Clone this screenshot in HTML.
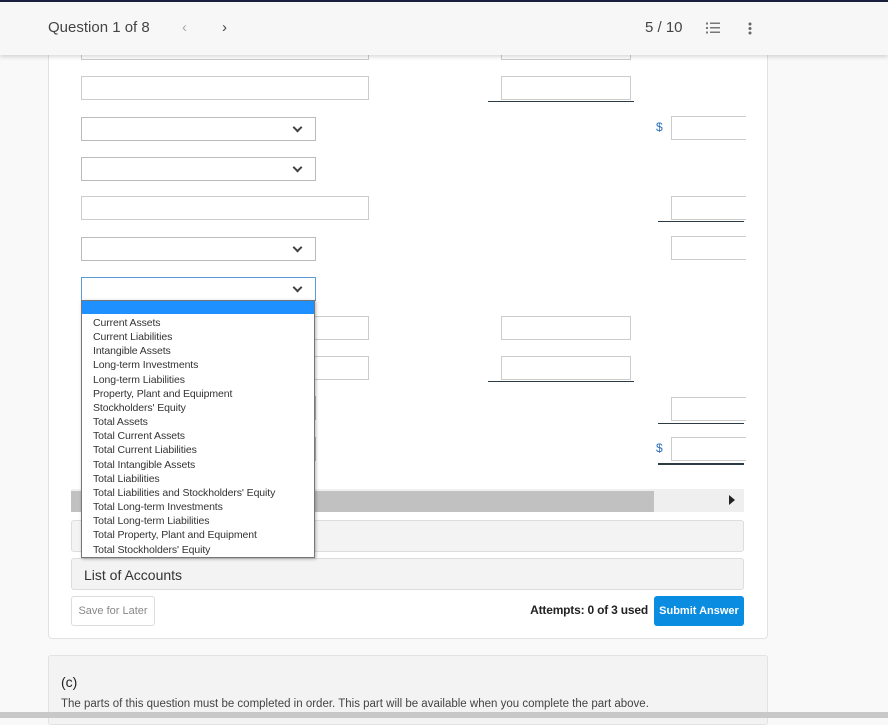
<!DOCTYPE html>
<html><head><meta charset="utf-8"><style>
*{box-sizing:border-box;margin:0;padding:0}
body{width:888px;height:718px;overflow:hidden;background:#f9f9f9;font-family:"Liberation Sans",sans-serif;position:relative;color:#333}
.abs{position:absolute}
.inp{position:absolute;height:24px;border:1px solid #ccc;background:#fff}
.sel{position:absolute;height:24px;border:1px solid #bbb;background:#fff;width:235px;left:81px}
.sel:after{content:"";position:absolute;right:14px;top:6px;width:5px;height:5px;border-right:2px solid #444;border-bottom:2px solid #444;transform:rotate(45deg)}
.line{position:absolute;height:1px;background:#2c3a44}
.dol{position:absolute;font-size:12px;color:#2a6ebb}
</style></head><body>
<div class="abs" style="left:48px;top:40px;width:720px;height:599px;background:#fff;border:1px solid #e2e2e2;border-top:none;border-radius:0 0 4px 4px"></div>

<div class="inp" style="left:81px;top:36px;width:288px"></div>
<div class="inp" style="left:501px;top:36px;width:130px"></div>
<div class="inp" style="left:81px;top:76px;width:288px"></div>
<div class="inp" style="left:501px;top:76px;width:130px"></div>
<div class="line" style="left:488px;top:101px;width:146px"></div>
<div class="sel" style="top:117px"></div>
<div class="dol" style="left:656px;top:120px">$</div>
<div class="inp" style="left:671px;top:116px;width:75px;border-right:none"></div>
<div class="sel" style="top:157px"></div>
<div class="inp" style="left:81px;top:196px;width:288px"></div>
<div class="inp" style="left:671px;top:196px;width:75px;border-right:none"></div>
<div class="line" style="left:658px;top:221px;width:86px"></div>
<div class="sel" style="top:237px"></div>
<div class="inp" style="left:671px;top:236px;width:75px;border-right:none"></div>
<div class="sel" style="top:277px;border-color:#5b9bd5"></div>
<div class="inp" style="left:81px;top:316px;width:288px"></div>
<div class="inp" style="left:501px;top:316px;width:130px"></div>
<div class="inp" style="left:81px;top:356px;width:288px"></div>
<div class="inp" style="left:501px;top:356px;width:130px"></div>
<div class="line" style="left:488px;top:381px;width:146px"></div>
<div class="sel" style="top:396px"></div>
<div class="inp" style="left:671px;top:397px;width:75px;border-right:none"></div>
<div class="line" style="left:658px;top:423px;width:86px"></div>
<div class="sel" style="top:437px"></div>
<div class="dol" style="left:656px;top:441px">$</div>
<div class="inp" style="left:671px;top:437px;width:75px;border-right:none"></div>
<div class="line" style="left:658px;top:463px;width:86px;height:2px"></div>

<div class="abs" style="left:71px;top:489px;width:673px;height:23px;background:#efefef"></div>
<div class="abs" style="left:71px;top:491px;width:583px;height:21px;background:#c1c1c1"></div>
<div class="abs" style="left:729px;top:495px;width:0;height:0;border-left:6px solid #222;border-top:5px solid transparent;border-bottom:5px solid transparent"></div>

<div class="abs" style="left:71px;top:520px;width:673px;height:32px;background:#f3f3f3;border:1px solid #ddd;border-radius:3px"></div>
<div class="abs" style="left:71px;top:558px;width:673px;height:32px;background:#f3f3f3;border:1px solid #ddd;border-radius:3px;font-size:14px;padding:8px 12px;color:#333">List of Accounts</div>

<div class="abs" style="left:71px;top:596px;width:84px;height:30px;border:1px solid #ddd;border-radius:3px;font-size:11px;color:#888;text-align:center;line-height:28px;background:#fff">Save for Later</div>
<div class="abs" style="left:520px;top:603px;width:128px;font-size:12px;font-weight:bold;color:#222;text-align:right;letter-spacing:-0.2px">Attempts: 0 of 3 used</div>
<div class="abs" style="left:654px;top:596px;width:90px;height:30px;background:#0a8de0;border-radius:3px;font-size:11px;font-weight:bold;color:#fff;text-align:center;line-height:30px">Submit Answer</div>

<div class="abs" style="left:48px;top:655px;width:720px;height:70px;background:#f3f3f3;border:1px solid #e2e2e2;border-radius:3px"></div>
<div class="abs" style="left:61px;top:674px;font-size:14px;color:#222">(c)</div>
<div class="abs" style="left:61px;top:698px;font-size:11.5px;color:#444">The parts of this question must be completed in order. This part will be available when you complete the part above.</div>
<div class="abs" style="left:0;top:712px;width:888px;height:6px;background:#c8c8c8"></div>

<div class="abs" style="left:81px;top:300px;width:234px;height:258px;background:#fff;border:1px solid #777;box-shadow:1px 1px 3px rgba(0,0,0,.3)">
<div style="height:13px;background:#1e90ff"></div>
<div style="padding:2px 0 0 11px;font-size:10.5px;line-height:14.15px;color:#333;letter-spacing:-0.1px">
Current Assets<br>Current Liabilities<br>Intangible Assets<br>Long-term Investments<br>Long-term Liabilities<br>Property, Plant and Equipment<br>Stockholders' Equity<br>Total Assets<br>Total Current Assets<br>Total Current Liabilities<br>Total Intangible Assets<br>Total Liabilities<br>Total Liabilities and Stockholders' Equity<br>Total Long-term Investments<br>Total Long-term Liabilities<br>Total Property, Plant and Equipment<br>Total Stockholders' Equity</div></div>

<div class="abs" style="left:0;top:0;width:888px;height:55px;background:#f7f7f7;border-top:2px solid #1a1f3d;box-shadow:0 2px 4px rgba(0,0,0,.15)"></div>
<div class="abs" style="left:48px;top:19px;font-size:15px;color:#444">Question 1 of 8</div>
<div class="abs" style="left:182px;top:19px;font-size:15px;color:#aaa">&lsaquo;</div>
<div class="abs" style="left:222px;top:19px;font-size:15px;color:#444">&rsaquo;</div>
<div class="abs" style="left:645px;top:19px;font-size:15px;color:#444">5 / 10</div>
<svg class="abs" style="left:706px;top:22px" width="14" height="12"><g fill="#777"><rect x="0" y="0.5" width="2" height="2"/><rect x="0" y="5" width="2" height="2"/><rect x="0" y="9.5" width="2" height="2"/><rect x="4" y="0.5" width="10" height="1.5"/><rect x="4" y="5" width="10" height="1.5"/><rect x="4" y="9.5" width="10" height="1.5"/></g></svg>
<svg class="abs" style="left:748px;top:22px" width="4" height="14"><g fill="#666"><circle cx="2" cy="2" r="1.5"/><circle cx="2" cy="6.5" r="1.5"/><circle cx="2" cy="11" r="1.5"/></g></svg>
</body></html>
